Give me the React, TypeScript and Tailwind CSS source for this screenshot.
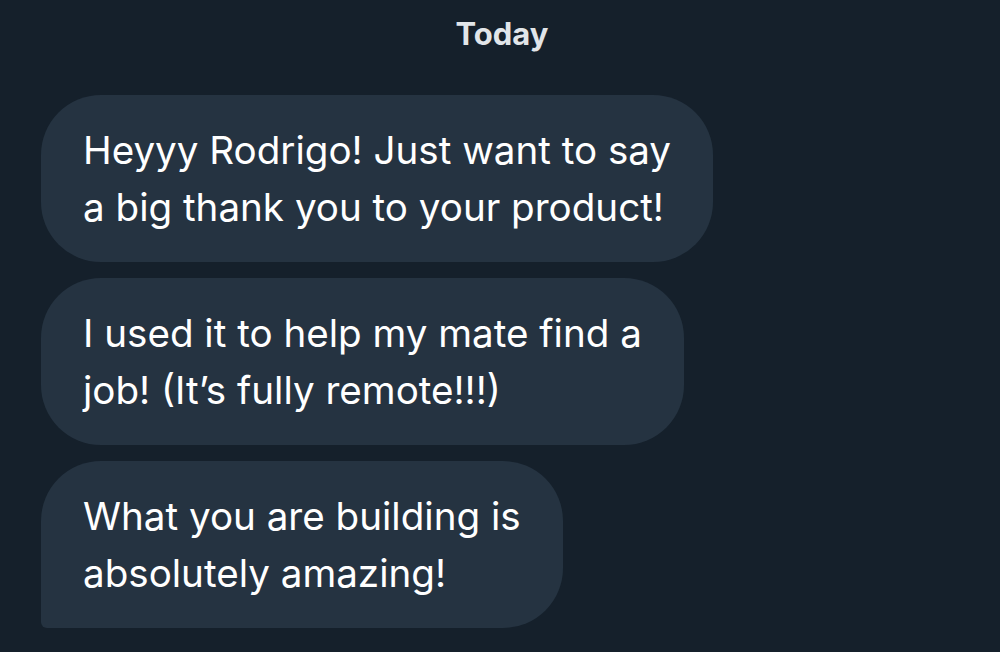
import React from 'react';

const messages = [
  ['Heyyy Rodrigo! Just want to say', 'a big thank you to your product!'],
  ['I used it to help my mate find a', 'job! (It’s fully remote!!!)'],
  ['What you are building is', 'absolutely amazing!'],
];

export default function App() {
  return (
    <div
      className="w-[1000px] h-[652px] overflow-hidden bg-[#15202b] text-[#e7e9ea]"
      style={{ fontFamily: 'Inter, "Liberation Sans", sans-serif' }}
    >
      <div className="pt-[14px] pl-[4px] text-center text-[31px] font-bold leading-[40px] text-[#e1e5e9]">
        Today
      </div>
      <div className="flex flex-col items-start gap-4 pl-[41px] pt-[41px]">
        {messages.map((lines, i) => (
          <div
            key={i}
            className={`w-fit bg-[#253341] px-[42px] py-[26.5px] text-[38.6px] leading-[57px] text-white rounded-[60px] ${
              i === messages.length - 1 ? 'rounded-bl-[6px]' : ''
            }`}
          >
            {lines.map((l) => (
              <div key={l} className="whitespace-nowrap">{l}</div>
            ))}
          </div>
        ))}
      </div>
    </div>
  );
}
